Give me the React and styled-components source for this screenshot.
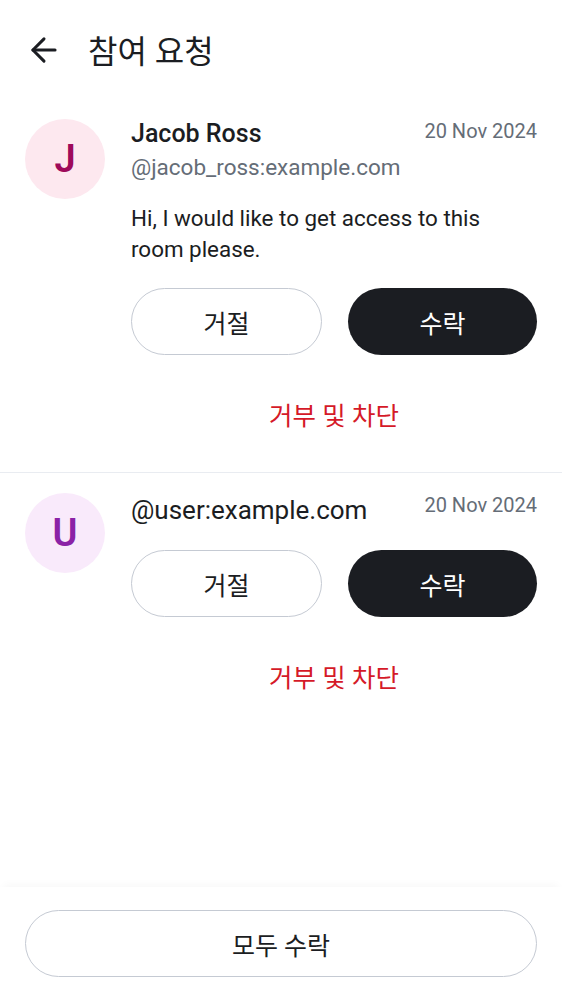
import React from 'react';
import styled, { createGlobalStyle } from 'styled-components';
import { ArrowLeft } from 'lucide-react';

const GlobalStyle = createGlobalStyle`
  html, body {
    margin: 0;
    padding: 0;
    background: #FFFFFF;
  }
  body {
    font-family: Roboto, "Noto Sans CJK KR", sans-serif;
    color: #1b1d22;
  }
  * { box-sizing: border-box; }
`

const Screen = styled.div`
  min-height: 100vh;
  display: flex;
  flex-direction: column;
`

const TopBar = styled.header`
  height: 99px;
  display: flex;
  align-items: center;
  padding: 4px 0 0 25px;
  gap: 25px;
`

const BackButton = styled.button`
  border: none;
  background: none;
  padding: 0;
  margin-top: -4px;
  display: flex;
  color: #1b1d22;
  cursor: pointer;
`

const Title = styled.h1`
  margin: 0;
  font-size: 32px;
  font-weight: 400;
  line-height: 40px;
`

const List = styled.main`
  flex: 1;
`

const Request = styled.section`
  display: flex;
  gap: 26px;
  padding: 20px 25px 31px 25px;
  border-bottom: ${p => (p.$divider ? '1px solid #e9ecf1' : 'none')};
`

const Avatar = styled.div`
  flex: none;
  width: 80px;
  height: 80px;
  border-radius: 50%;
  display: flex;
  align-items: center;
  justify-content: center;
  background: ${p => p.$bg};
  color: ${p => p.$fg};
  font-size: 38px;
  font-weight: 600;
`

const Body = styled.div`
  flex: 1;
  display: flex;
  flex-direction: column;
`

const NameRow = styled.div`
  display: flex;
  justify-content: space-between;
  align-items: flex-start;
`

const Name = styled.div`
  font-size: ${p => (p.$tall ? '26px' : '25px')};
  font-weight: ${p => (p.$bold ? 500 : 400)};
  line-height: ${p => (p.$tall ? '34px' : '30px')};
`

const Date = styled.div`
  font-size: 20px;
  line-height: 24px;
  color: #656d77;
`

const Handle = styled.div`
  margin-top: 4px;
  font-size: 22.5px;
  line-height: 28px;
  color: #656d77;
`

const Message = styled.p`
  margin: 22px 0 0;
  font-size: 22.4px;
  line-height: 31px;
`

const Actions = styled.div`
  margin-top: 23px;
  display: flex;
  gap: 26px;
`

const PillButton = styled.button`
  flex: 1;
  height: 67px;
  border-radius: 34px;
  font-family: inherit;
  font-size: 25px;
  font-weight: 400;
  cursor: pointer;
  border: ${p => (p.$primary ? 'none' : '1.5px solid #c5cad3')};
  background: ${p => (p.$primary ? '#1b1d22' : '#FFFFFF')};
  color: ${p => (p.$primary ? '#FFFFFF' : '#1b1d22')};
`

const DangerButton = styled.button`
  margin-top: 30px;
  height: 56px;
  border: none;
  background: none;
  font-family: inherit;
  font-size: 25.5px;
  font-weight: 400;
  color: #d51928;
  cursor: pointer;
`

const BottomBar = styled.footer`
  padding: 23px 25px 23px 25px;
  background: #FFFFFF;
  box-shadow: 0 -6px 8px -4px rgba(0, 0, 0, 0.035);
`

const WideButton = styled(PillButton)`
  width: 100%;
`

const requests = [
  {
    id: 1,
    initial: 'J',
    bg: '#fde8ef',
    fg: '#9e0a5a',
    name: 'Jacob Ross',
    handle: '@jacob_ross:example.com',
    message: 'Hi, I would like to get access to this room please.',
    date: '20 Nov 2024',
  },
  {
    id: 2,
    initial: 'U',
    bg: '#f9eafb',
    fg: '#8b22a6',
    name: '@user:example.com',
    date: '20 Nov 2024',
  },
];

function RequestItem({ req, divider }) {
  return (
    <Request $divider={divider}>
      <Avatar $bg={req.bg} $fg={req.fg}>{req.initial}</Avatar>
      <Body>
        <NameRow>
          <Name $bold={!!req.handle} $tall={!req.handle}>{req.name}</Name>
          <Date>{req.date}</Date>
        </NameRow>
        {req.handle && <Handle>{req.handle}</Handle>}
        {req.message && <Message>{req.message}</Message>}
        <Actions>
          <PillButton>거절</PillButton>
          <PillButton $primary>수락</PillButton>
        </Actions>
        <DangerButton>거부 및 차단</DangerButton>
      </Body>
    </Request>
  );
}

export default function App() {
  return (
    <Screen>
      <GlobalStyle />
      <TopBar>
        <BackButton aria-label="back">
          <ArrowLeft size={38} strokeWidth={1.9} />
        </BackButton>
        <Title>참여 요청</Title>
      </TopBar>
      <List>
        {requests.map((r, i) => (
          <RequestItem key={r.id} req={r} divider={i === 0} />
        ))}
      </List>
      <BottomBar>
        <WideButton>모두 수락</WideButton>
      </BottomBar>
    </Screen>
  );
}
